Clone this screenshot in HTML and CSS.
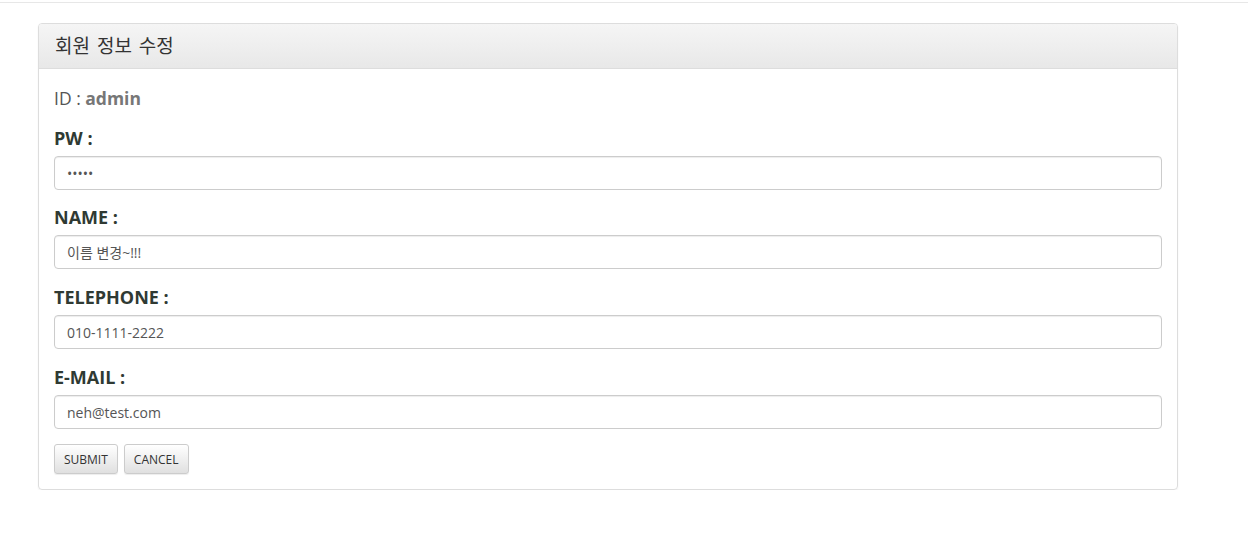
FILE: index.html
```html
<!DOCTYPE html>
<html lang="ko">
<head>
  <meta charset="UTF-8" />
  <meta name="viewport" content="width=device-width, initial-scale=1.0" />
  <title>회원 정보 수정</title>
  <link rel="stylesheet" href="styles.css">
</head>
<body>
  <div class="topline"></div>
  <div class="container">
    <div class="panel">
      <div class="panel-heading">회원 정보 수정</div>
      <div class="panel-body">
        <p class="user-id">ID : <b>admin</b></p>
        <form>
          <div class="form-group first">
            <label for="pw">PW :</label>
            <input type="password" id="pw" class="form-control" value="12345">
          </div>
          <div class="form-group">
            <label for="name">NAME :</label>
            <input type="text" id="name" class="form-control" value="이름 변경~!!!">
          </div>
          <div class="form-group">
            <label for="tel">TELEPHONE :</label>
            <input type="text" id="tel" class="form-control" value="010-1111-2222">
          </div>
          <div class="form-group last">
            <label for="email">E-MAIL :</label>
            <input type="text" id="email" class="form-control" value="neh@test.com">
          </div>
          <div class="buttons">
            <button type="submit" class="btn">SUBMIT</button>
            <button type="button" class="btn">CANCEL</button>
          </div>
        </form>
      </div>
    </div>
  </div>
</body>
</html>
```

FILE: styles.css
```css
body {
  margin: 0;
  padding: 0;
  font-family: 'Open Sans', 'Noto Sans CJK KR', sans-serif;
  color: #333;
  background: #fff;
}
.topline {
  height: 2px;
  border-bottom: 1px solid #e7e7e7;
}
.container {
  width: 1140px;
  margin: 20px 0 0 38px;
}
.panel {
  border: 1px solid #ddd;
  border-radius: 4px;
  box-shadow: 0 1px 2px rgba(0,0,0,0.05);
}
.panel-heading {
  height: 44px;
  line-height: 44px;
  padding: 0 16px;
  font-size: 19px;
  word-spacing: 2px;
  color: #333;
  background: linear-gradient(to bottom, #f5f5f5, #e8e8e8);
  border-bottom: 1px solid #ddd;
  border-radius: 3px 3px 0 0;
}
.panel-body {
  padding: 15px;
}
.user-id {
  margin: 0 0 15px;
  font-size: 17.5px;
  line-height: 28px;
  color: #555;
}
.user-id b {
  color: #777;
}
.form-group {
  margin-bottom: 17px;
}
.form-group.first {
  margin-bottom: 16px;
}
.form-group.last {
  margin-bottom: 15px;
}
label {
  display: block;
  font-size: 18px;
  font-weight: bold;
  line-height: 23px;
  margin-bottom: 6px;
  color: #2f3a33;
}
.form-control {
  display: block;
  box-sizing: border-box;
  width: 100%;
  height: 34px;
  padding: 6px 12px;
  font-family: 'Open Sans', 'Noto Sans CJK KR', sans-serif;
  font-size: 14px;
  color: #555;
  background: #fff;
  border: 1px solid #ccc;
  border-radius: 4px;
  box-shadow: inset 0 1px 1px rgba(0,0,0,0.075);
}
.buttons {
  display: flex;
  gap: 6px;
}
.btn {
  height: 30px;
  padding: 0 9px;
  font-family: 'Open Sans', 'Noto Sans CJK KR', sans-serif;
  font-size: 12px;
  color: #333;
  background: linear-gradient(to bottom, #fff, #e0e0e0);
  border: 1px solid #ccc;
  border-radius: 3px;
  box-shadow: inset 0 1px 0 rgba(255,255,255,0.15), 0 1px 1px rgba(0,0,0,0.075);
  cursor: pointer;
}
```
